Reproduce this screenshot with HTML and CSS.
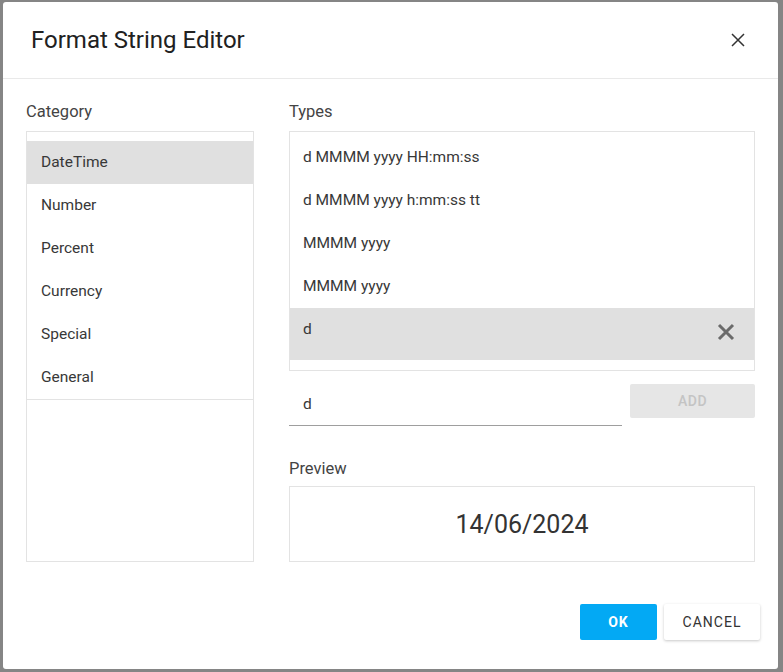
FILE: index.html
```html
<!DOCTYPE html>
<html lang="en">
<head>
<meta charset="utf-8">
<title>Format String Editor</title>
<link rel="stylesheet" href="styles.css">
</head>
<body>
<div class="dialog">
  <div class="header">
    <div class="title">Format String Editor</div>
    <button class="close" aria-label="Close">
      <svg width="14" height="14" viewBox="0 0 14 14"><path d="M1 1L13 13M13 1L1 13" stroke="#333" stroke-width="1.5" fill="none"/></svg>
    </button>
  </div>
  <div class="content">
    <div class="col-left">
      <div class="label">Category</div>
      <div class="cat-box">
        <ul class="cat-list">
          <li class="cat-item selected">DateTime</li>
          <li class="cat-item">Number</li>
          <li class="cat-item">Percent</li>
          <li class="cat-item">Currency</li>
          <li class="cat-item">Special</li>
          <li class="cat-item">General</li>
        </ul>
      </div>
    </div>
    <div class="col-right">
      <div class="label">Types</div>
      <div class="types-box">
        <ul class="types-list">
          <li class="type-item">d MMMM yyyy HH:mm:ss</li>
          <li class="type-item">d MMMM yyyy h:mm:ss tt</li>
          <li class="type-item">MMMM yyyy</li>
          <li class="type-item">MMMM yyyy</li>
          <li class="type-item selected"><span>d</span>
            <svg class="del" width="18" height="18" viewBox="0 0 18 18"><path d="M2 2L16 16M16 2L2 16" stroke="#6b6b6b" stroke-width="3" fill="none"/></svg>
          </li>
        </ul>
      </div>
      <div class="add-row">
        <div class="input">d</div>
        <button class="add-btn">ADD</button>
      </div>
      <div class="label preview-label">Preview</div>
      <div class="preview-box">14/06/2024</div>
    </div>
  </div>
  <div class="footer">
    <button class="btn btn-ok">OK</button>
    <button class="btn btn-cancel">CANCEL</button>
  </div>
</div>
</body>
</html>
```
FILE: styles.css
```css
* { box-sizing: border-box; }
html, body { margin: 0; padding: 0; }
body {
  width: 783px;
  height: 672px;
  overflow: hidden;
  background: #858585;
  font-family: Roboto, "Liberation Sans", sans-serif;
  color: #333;
  padding: 2px 5px 3px 3px;
}
.dialog {
  width: 775px;
  height: 667px;
  background: #fff;
  border-radius: 3px;
  display: flex;
  flex-direction: column;
}
.header {
  height: 77px;
  flex: none;
  display: flex;
  align-items: center;
  justify-content: space-between;
  padding: 0 33px 0 28px;
  border-bottom: 1px solid #e9e9e9;
}
.title {
  font-size: 24px;
  font-weight: 400;
  color: #212121;
}
.close {
  border: 0;
  background: none;
  padding: 0;
  width: 14px;
  height: 14px;
  display: flex;
}
.content {
  display: flex;
  gap: 35px;
  padding: 23px 0 0 23px;
}
.label {
  font-size: 16.5px;
  line-height: 20px;
  color: #444;
  margin-bottom: 9px;
}
.col-left { width: 228px; }
.col-right { width: 466px; }
.cat-box {
  height: 431px;
  border: 1px solid #e3e3e3;
  padding-top: 9px;
}
ul { list-style: none; margin: 0; padding: 0; }
.cat-list { border-bottom: 1px solid #e3e3e3; }
.cat-item {
  height: 43px;
  line-height: 43px;
  padding-left: 14px;
  font-size: 15.5px;
  color: #383838;
}
.cat-item.selected { background: #e0e0e0; }
.types-box {
  height: 240px;
  border: 1px solid #e3e3e3;
  padding-top: 4px;
}
.type-item {
  height: 43px;
  line-height: 43px;
  padding-left: 13px;
  font-size: 15.5px;
  color: #383838;
}
.type-item.selected {
  height: 52px;
  background: #e0e0e0;
  display: flex;
  justify-content: space-between;
  padding-right: 19px;
}
.type-item.selected .del { margin-top: 15px; }
.add-row {
  display: flex;
  gap: 8px;
  margin-top: 13px;
  align-items: flex-start;
}
.input {
  width: 333px;
  height: 42px;
  line-height: 40px;
  padding-left: 14px;
  font-size: 15.5px;
  color: #383838;
  border-bottom: 1px solid #9e9e9e;
}
.add-btn {
  width: 125px;
  height: 34px;
  border: 0;
  border-radius: 2px;
  background: #e6e6e6;
  color: #c4c4c4;
  font-family: Roboto, "Liberation Sans", sans-serif;
  font-size: 14px;
  font-weight: 500;
  letter-spacing: 0.5px;
}
.preview-label { margin-top: 33px; margin-bottom: 7px; }
.preview-box {
  height: 76px;
  border: 1px solid #e3e3e3;
  display: flex;
  align-items: center;
  justify-content: center;
  font-size: 25px;
  color: #333;
}
.footer {
  display: flex;
  justify-content: flex-end;
  gap: 7px;
  padding: 42px 18px 0 0;
}
.btn {
  height: 36px;
  border: 0;
  border-radius: 2px;
  font-family: Roboto, "Liberation Sans", sans-serif;
  font-size: 14px;
  font-weight: 500;
  letter-spacing: 1px;
}
.btn-ok {
  width: 77px;
  background: #03a9f4;
  color: #fff;
  font-weight: 700;
}
.btn-cancel {
  width: 96px;
  background: #fff;
  color: #333;
  font-weight: 400;
  box-shadow: 0 1px 3px rgba(0,0,0,0.22);
}
```
